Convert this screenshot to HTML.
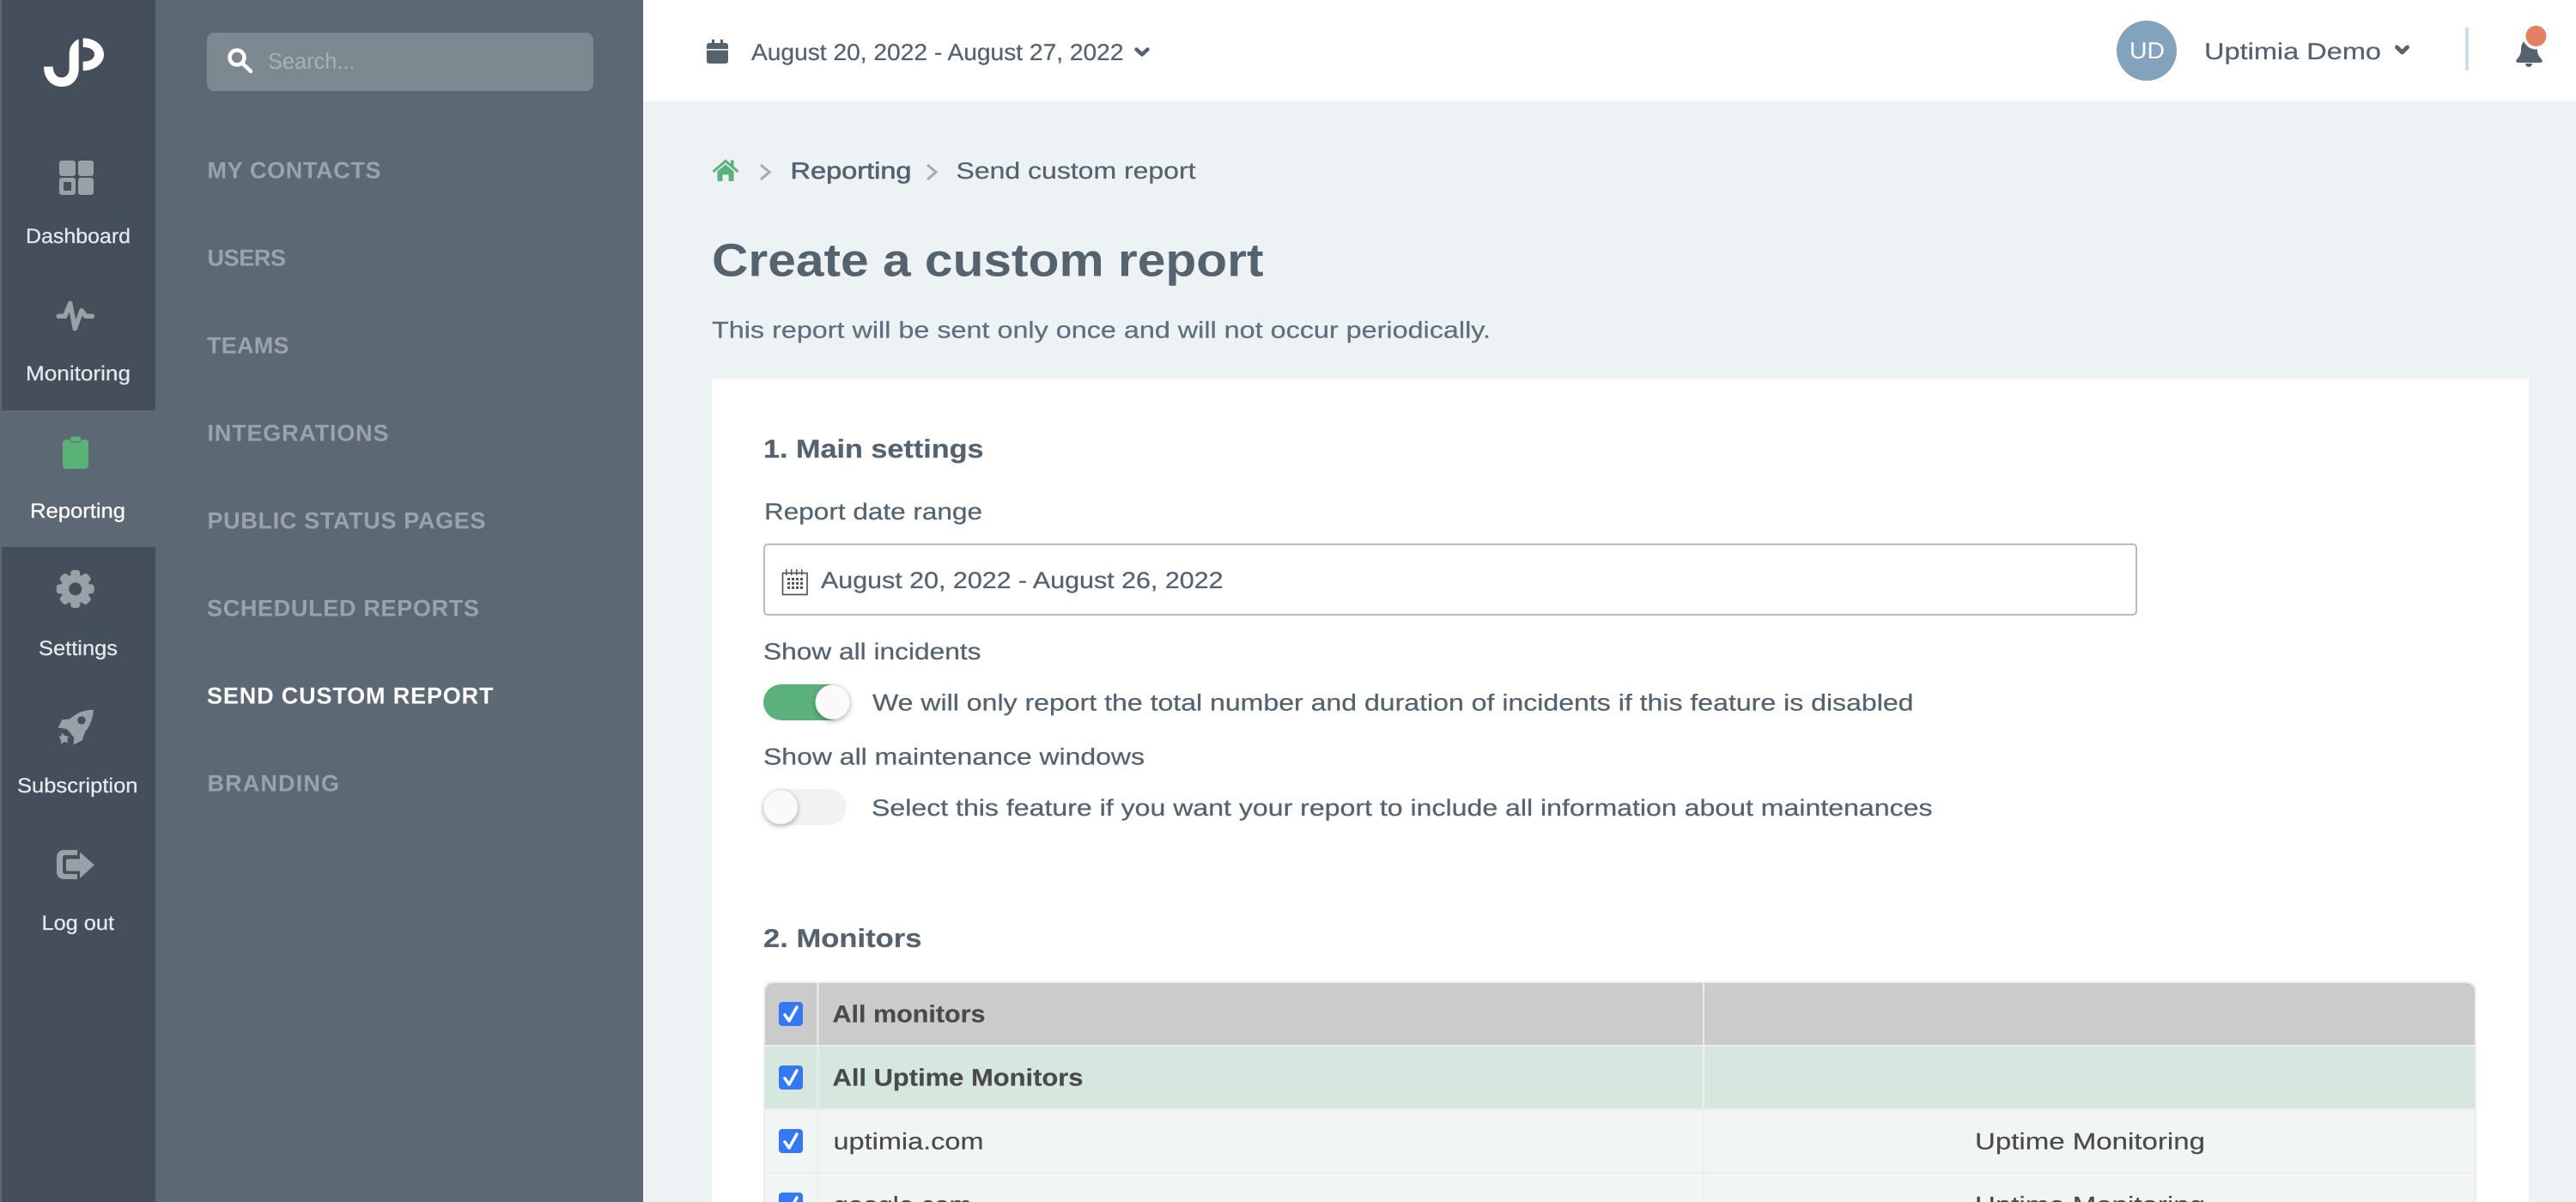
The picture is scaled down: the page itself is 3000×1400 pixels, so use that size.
<!DOCTYPE html>
<html lang="en">
<head>
<meta charset="utf-8">
<title>Create a custom report</title>
<style>
html,body{margin:0;padding:0;width:3000px;height:1400px;overflow:hidden;background:#edf2f5}
svg{position:absolute;left:0;top:0;display:block}
text{font-family:"Liberation Sans",Arial,sans-serif;text-rendering:geometricPrecision}
.rl{font-size:24px;fill:#e6e9eb;stroke:#e6e9eb;stroke-width:.25px}
.nv{font-size:27px;font-weight:700;fill:#9aa3aa}
.t{font-size:27px;fill:#55636f;stroke:#55636f;stroke-width:.25px}
.b{font-weight:700;font-size:30px;stroke-width:.2px}
.d{font-size:27px;fill:#4a4a4a;stroke:#4a4a4a;stroke-width:.2px}
.ic{fill:#98a1a6}
</style>
</head>
<body>
<svg width="3000" height="1400" viewBox="0 0 3000 1400" xmlns="http://www.w3.org/2000/svg">
<!-- backgrounds -->
<rect width="3000" height="1400" fill="#edf2f5"/>
<rect x="749" width="2251" height="118" fill="#fff"/>
<rect width="749" height="1400" fill="#5c6975"/>
<rect x="2" width="179" height="478" fill="#444f5b"/>
<rect x="2" y="637" width="179" height="763" fill="#444f5b"/>

<!-- logo -->
<g transform="translate(40 30) scale(.3333)" fill="#fff">
<path d="M33 143H65C65 165 78 181 95 181C112 181 122 168 122 150V100C122 75 135 55 155 47V150C155 190 130 213 95 213C60 213 33 185 33 143Z"/>
<path d="M170 43C210 43 243 68 243 100C243 132 210 157 170 157V125C195 125 210 115 210 100C210 85 195 75 170 75Z"/>
</g>

<!-- rail icons -->
<g class="ic">
<rect x="69" y="187" width="19" height="18" rx="3"/>
<rect x="91" y="187" width="18" height="18" rx="3"/>
<path fill-rule="evenodd" d="M72 207H85a3 3 0 0 1 3 3V224a3 3 0 0 1-3 3H72a3 3 0 0 1-3-3V210a3 3 0 0 1 3-3ZM74 212V222H83V212Z"/>
<rect x="91" y="207" width="18" height="20" rx="3"/>
</g>
<polyline points="68.3,368.3 75.7,368.3 81.7,353.3 87.3,382.7 95,361.7 100,368.3 107.3,368.3" fill="none" stroke="#98a1a6" stroke-width="5.5" stroke-linecap="round" stroke-linejoin="round"/>
<rect x="73" y="512" width="30" height="34" rx="4" fill="#5bb279"/>
<rect x="81.5" y="508" width="13" height="7" rx="3" fill="#5bb279" stroke="#5c6975" stroke-width="1"/>
<g transform="translate(87.7 686)" fill="#98a1a6">
<circle r="17"/>
<g><rect x="-5.5" y="-22" width="11" height="44" rx="3.5"/><rect x="-5.5" y="-22" width="11" height="44" rx="3.5" transform="rotate(45)"/><rect x="-5.5" y="-22" width="11" height="44" rx="3.5" transform="rotate(90)"/><rect x="-5.5" y="-22" width="11" height="44" rx="3.5" transform="rotate(135)"/></g>
<circle r="7.5" fill="#444f5b"/>
</g>
<g transform="translate(55 815) scale(.3333)" fill="#98a1a6">
<path fill-rule="evenodd" d="M162 35C135 36 115 42 100 52L76 68L52 70L38 98L68 102L94 132L92 157L122 142L132 112C148 95 160 65 162 35ZM120 58a14 14 0 1 0 .01 0Z"/>
<path d="M50 115L62 126L76 129L70 136L72 150L60 147L48 155L48 141L40 128L50 128Z"/>
</g>
<g fill="#98a1a6">
<path d="M90 990V996H76a3 3 0 0 0-3 3V1015a3 3 0 0 0 3 3H90V1024H74a8 8 0 0 1-8-8V998a8 8 0 0 1 8-8Z"/>
<path d="M79 1000.500H93V992.500L110 1007.500L93 1023V1014.500H79a2 2 0 0 1-2-2V1002.500a2 2 0 0 1 2-2Z"/>
</g>

<!-- rail labels -->
<text class="rl" x="30" y="283" textLength="122" lengthAdjust="spacingAndGlyphs">Dashboard</text>
<text class="rl" x="30" y="443" textLength="122" lengthAdjust="spacingAndGlyphs">Monitoring</text>
<text class="rl" x="35" y="603" textLength="111" lengthAdjust="spacingAndGlyphs" style="fill:#fff;stroke:#fff">Reporting</text>
<text class="rl" x="45" y="763" textLength="92" lengthAdjust="spacingAndGlyphs">Settings</text>
<text class="rl" x="20" y="923" textLength="140.500" lengthAdjust="spacingAndGlyphs">Subscription</text>
<text class="rl" x="48.500" y="1083" textLength="84.500" lengthAdjust="spacingAndGlyphs">Log out</text>

<!-- search -->
<rect x="241" y="38" width="450" height="68" rx="9" fill="#7c8991"/>
<circle cx="276" cy="67" r="8.500" fill="none" stroke="#fff" stroke-width="4.500"/>
<line x1="282.500" y1="74" x2="292" y2="83" stroke="#fff" stroke-width="4.500" stroke-linecap="round"/>
<text x="312" y="80" font-size="26" fill="#a7b0b6" textLength="101.500" lengthAdjust="spacingAndGlyphs">Search...</text>

<!-- sub nav -->
<text class="nv" x="241.500" y="207.500" textLength="202" lengthAdjust="spacing">MY CONTACTS</text>
<text class="nv" x="241.500" y="309.500" textLength="91.500" lengthAdjust="spacing">USERS</text>
<text class="nv" x="241" y="411.500" textLength="95.500" lengthAdjust="spacing">TEAMS</text>
<text class="nv" x="241.500" y="513.500" textLength="211" lengthAdjust="spacing">INTEGRATIONS</text>
<text class="nv" x="241.500" y="615.500" textLength="324" lengthAdjust="spacing">PUBLIC STATUS PAGES</text>
<text class="nv" x="241" y="717.500" textLength="317" lengthAdjust="spacing">SCHEDULED REPORTS</text>
<text class="nv" x="241" y="819.500" textLength="333.500" lengthAdjust="spacing" style="fill:#fff">SEND CUSTOM REPORT</text>
<text class="nv" x="241.500" y="921.500" textLength="153.500" lengthAdjust="spacing">BRANDING</text>

<!-- top bar -->
<g fill="#55636f">
<path d="M829 46h3v4h7v-4h3v4h3a3 3 0 0 1 3 3v4h-25v-4a3 3 0 0 1 3-3h3Z"/>
<path d="M823 58.500h25V71a3 3 0 0 1-3 3h-19a3 3 0 0 1-3-3Z"/>
</g>
<text class="t" x="875" y="70" textLength="433.500" lengthAdjust="spacingAndGlyphs">August 20, 2022 - August 27, 2022</text>
<polyline points="1323.500,57.500 1330,63.500 1336.500,57.500" fill="none" stroke="#55636f" stroke-width="4.500" stroke-linecap="round" stroke-linejoin="round"/>

<circle cx="2500" cy="59" r="35" fill="#83a2bb"/>
<text x="2480" y="68" font-size="27" fill="#fff" textLength="41" lengthAdjust="spacingAndGlyphs">UD</text>
<text class="t" x="2567" y="69" textLength="206" lengthAdjust="spacingAndGlyphs">Uptimia Demo</text>
<polyline points="2791.500,55 2797.500,61 2803.500,55" fill="none" stroke="#55636f" stroke-width="4.800" stroke-linecap="round" stroke-linejoin="round"/>
<rect x="2871" y="32" width="4" height="50" fill="#d0dbe4"/>
<path d="M2945 46c-7 1-9 6-9 12 0 5-2 8-5 11-1.500 2-.5 4 2 4h25c2.500 0 3.500-2 2-4-3-3-5-6-5-11 0-6-2-11-10-12Z" fill="#55636f"/>
<path d="M2941 74a4 4 0 0 0 8 0Z" fill="#55636f"/>
<circle cx="2953.500" cy="42" r="15.500" fill="#fff"/>
<circle cx="2953.500" cy="42" r="12" fill="#e57f66"/>

<!-- breadcrumb -->
<g fill="#5bb279">
<path d="M835.500 199.500L845 191.500L854.500 199.500V211H848.500V203.500H841.500V211H835.500Z"/>
<rect x="851" y="186.500" width="3.500" height="8"/>
</g>
<polyline points="830.500,200 845,187.500 859.500,200" fill="none" stroke="#5bb279" stroke-width="3"/>
<polyline points="886,192 896,200.500 886,209" fill="none" stroke="#a3abb1" stroke-width="3"/>
<polyline points="1080,192 1090,200.500 1080,209" fill="none" stroke="#a3abb1" stroke-width="3"/>
<text class="t" x="920.500" y="208" textLength="141" lengthAdjust="spacingAndGlyphs" style="stroke-width:.6px">Reporting</text>
<text class="t" x="1113.500" y="208" textLength="279" lengthAdjust="spacingAndGlyphs">Send custom report</text>

<!-- heading -->
<text x="829" y="321.500" font-size="54" font-weight="700" fill="#55636f" textLength="642.500" lengthAdjust="spacingAndGlyphs">Create a custom report</text>
<text class="t" x="829" y="393.500" style="fill:#5f6f7d;stroke:#5f6f7d" textLength="907" lengthAdjust="spacingAndGlyphs">This report will be sent only once and will not occur periodically.</text>

<!-- card -->
<rect x="829" y="441" width="2116" height="959" fill="#fff"/>
<text class="t b" x="889" y="533" textLength="256.500" lengthAdjust="spacingAndGlyphs">1. Main settings</text>
<text class="t" x="890" y="605" textLength="254" lengthAdjust="spacingAndGlyphs">Report date range</text>

<rect x="890" y="634" width="1598" height="82" rx="4" fill="#fff" stroke="#bbb" stroke-width="2"/>
<g fill="#4d5761">
<rect x="911.500" y="667.500" width="28.500" height="25" fill="none" stroke="#555" stroke-width="1.700"/>
<rect x="915" y="663" width="1.500" height="7"/><rect x="921" y="663" width="1.500" height="7"/><rect x="927" y="663" width="1.500" height="7"/><rect x="933" y="663" width="1.500" height="7"/>
<path d="M917 673h3v3h-3zM922 673h3v3h-3zM927 673h3v3h-3zM932 673h3v3h-3zM917 678h3v3h-3zM922 678h3v3h-3zM927 678h3v3h-3zM932 678h3v3h-3zM917 683h3v3h-3zM922 683h3v3h-3zM927 683h3v3h-3zM932 683h3v3h-3z"/>
</g>
<text class="t" x="956" y="685" textLength="468.500" lengthAdjust="spacingAndGlyphs">August 20, 2022 - August 26, 2022</text>

<text class="t" x="889" y="768" textLength="253.500" lengthAdjust="spacingAndGlyphs">Show all incidents</text>
<rect x="889" y="797" width="98" height="42" rx="21" fill="#5bb17c"/>
<circle cx="969.800" cy="817.700" r="20" fill="#fafafa" stroke="#e0e0e0" stroke-width=".8" style="filter:drop-shadow(0 2px 3px rgba(0,0,0,.3))"/>
<text class="t" x="1016" y="827.500" textLength="1212.500" lengthAdjust="spacingAndGlyphs">We will only report the total number and duration of incidents if this feature is disabled</text>

<text class="t" x="889" y="890.500" textLength="444" lengthAdjust="spacingAndGlyphs">Show all maintenance windows</text>
<rect x="889" y="919" width="97" height="42" rx="21" fill="#f2f2f2"/>
<circle cx="909" cy="940" r="20" fill="#fafafa" stroke="#e0e0e0" stroke-width=".8" style="filter:drop-shadow(0 2px 3px rgba(0,0,0,.3))"/>
<text class="t" x="1015" y="950" textLength="1235.500" lengthAdjust="spacingAndGlyphs">Select this feature if you want your report to include all information about maintenances</text>

<text class="t b" x="889" y="1103" textLength="184.500" lengthAdjust="spacingAndGlyphs">2. Monitors</text>

<!-- table -->
<path d="M889 1400V1153a10 10 0 0 1 10-10H2874a10 10 0 0 1 10 10V1400Z" fill="#ededed"/>
<path d="M891 1217V1155a10 10 0 0 1 10-10H2872a10 10 0 0 1 10 10V1217Z" fill="#cbcbcb"/>
<rect x="891" y="1219" width="1991" height="72" fill="#d6e7df"/>
<rect x="891" y="1293" width="1991" height="72" fill="#f1f6f4"/>
<rect x="891" y="1367" width="1991" height="33" fill="#f1f6f4"/>
<rect x="951.500" y="1145" width="2" height="255" fill="#ededed"/>
<rect x="1983" y="1145" width="2" height="255" fill="#ededed"/>

<g fill="#3478f6">
<rect x="907" y="1167" width="28" height="28" rx="4"/>
<rect x="907" y="1241" width="28" height="28" rx="4"/>
<rect x="907" y="1315" width="28" height="28" rx="4"/>
<rect x="907" y="1389" width="28" height="28" rx="4"/>
</g>
<g fill="none" stroke="#fff" stroke-width="3.500" stroke-linecap="round" stroke-linejoin="round">
<polyline points="914,1182 919,1189 928,1173"/>
<polyline points="914,1256 919,1263 928,1247"/>
<polyline points="914,1330 919,1337 928,1321"/>
<polyline points="914,1404 919,1411 928,1395"/>
</g>

<text class="d" x="969.500" y="1190.500" font-weight="700" style="font-size:28px" textLength="178" lengthAdjust="spacingAndGlyphs">All monitors</text>
<text class="d" x="969.500" y="1264.500" font-weight="700" style="font-size:28px" textLength="292" lengthAdjust="spacingAndGlyphs">All Uptime Monitors</text>
<text class="d" x="970.500" y="1338.500" textLength="175" lengthAdjust="spacingAndGlyphs">uptimia.com</text>
<text class="d" x="970.500" y="1412.500" textLength="161" lengthAdjust="spacingAndGlyphs">google.com</text>
<text class="d" x="2300" y="1338.500" textLength="268" lengthAdjust="spacingAndGlyphs">Uptime Monitoring</text>
<text class="d" x="2300" y="1412.500" textLength="268" lengthAdjust="spacingAndGlyphs">Uptime Monitoring</text>
</svg>
</body>
</html>
